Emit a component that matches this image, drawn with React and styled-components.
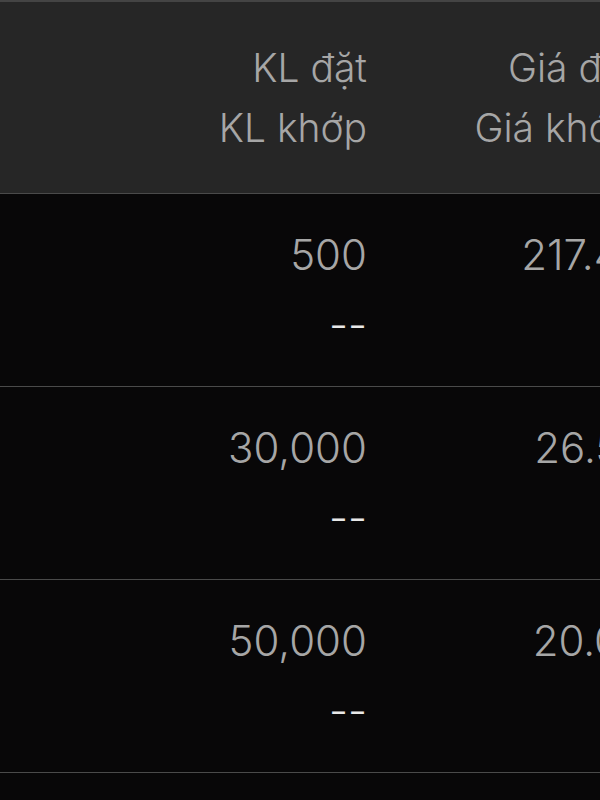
import React from "react";
import styled, { createGlobalStyle } from "styled-components";

const Global = createGlobalStyle`
  html, body {
    margin: 0;
    padding: 0;
    background: #080708;
    overflow: hidden;
  }
  body {
    font-family: Inter, "Noto Sans", sans-serif;
  }
`;

const Table = styled.div`
  width: 600px;
  height: 800px;
  overflow: hidden;
  background: #080708;
  border-top: 2px solid #444;
`;

// header and body rows share the first column edge; the price column sits a bit wider in the body
const Row = styled.div`
  display: grid;
  grid-template-columns: ${p => (p.head ? "367px 268px" : "367px 279px")};
  width: 646px;
  height: ${p => (p.head ? 191 : 192)}px;
  background: ${p => (p.head ? "#262626" : "#080708")};
  border-bottom: 1px solid #4a4a4a;
  box-sizing: content-box;
`;

const Cell = styled.div`
  display: flex;
  flex-direction: column;
  align-items: flex-end;
  justify-content: center;
  gap: ${p => (p.head ? 4 : 20)}px;
`;

const Line = styled.span`
  font-size: ${p => (p.head ? 39 : 42)}px;
  font-weight: 300;
  line-height: ${p => (p.head ? 56 : 50)}px;
  color: ${p => (p.bright ? "#e8e8e8" : "#a6a6a6")};
  white-space: nowrap;
`;

const rows = [
  { kl: "500", gia: "217.40" },
  { kl: "30,000", gia: "26.50" },
  { kl: "50,000", gia: "20.00" },
];

const App = () => {
  return (
    <>
      <Global />
      <Table>
        <Row head>
          <Cell head>
            <Line head>KL đặt</Line>
            <Line head>KL khớp</Line>
          </Cell>
          <Cell head>
            <Line head>Giá đặt</Line>
            <Line head>Giá khớp</Line>
          </Cell>
        </Row>
        {rows.map(r => (
          <Row key={r.kl}>
            <Cell>
              <Line>{r.kl}</Line>
              <Line bright>--</Line>
            </Cell>
            <Cell>
              <Line>{r.gia}</Line>
              <Line bright>--</Line>
            </Cell>
          </Row>
        ))}
        <Row />
      </Table>
    </>
  );
};

export default App;
